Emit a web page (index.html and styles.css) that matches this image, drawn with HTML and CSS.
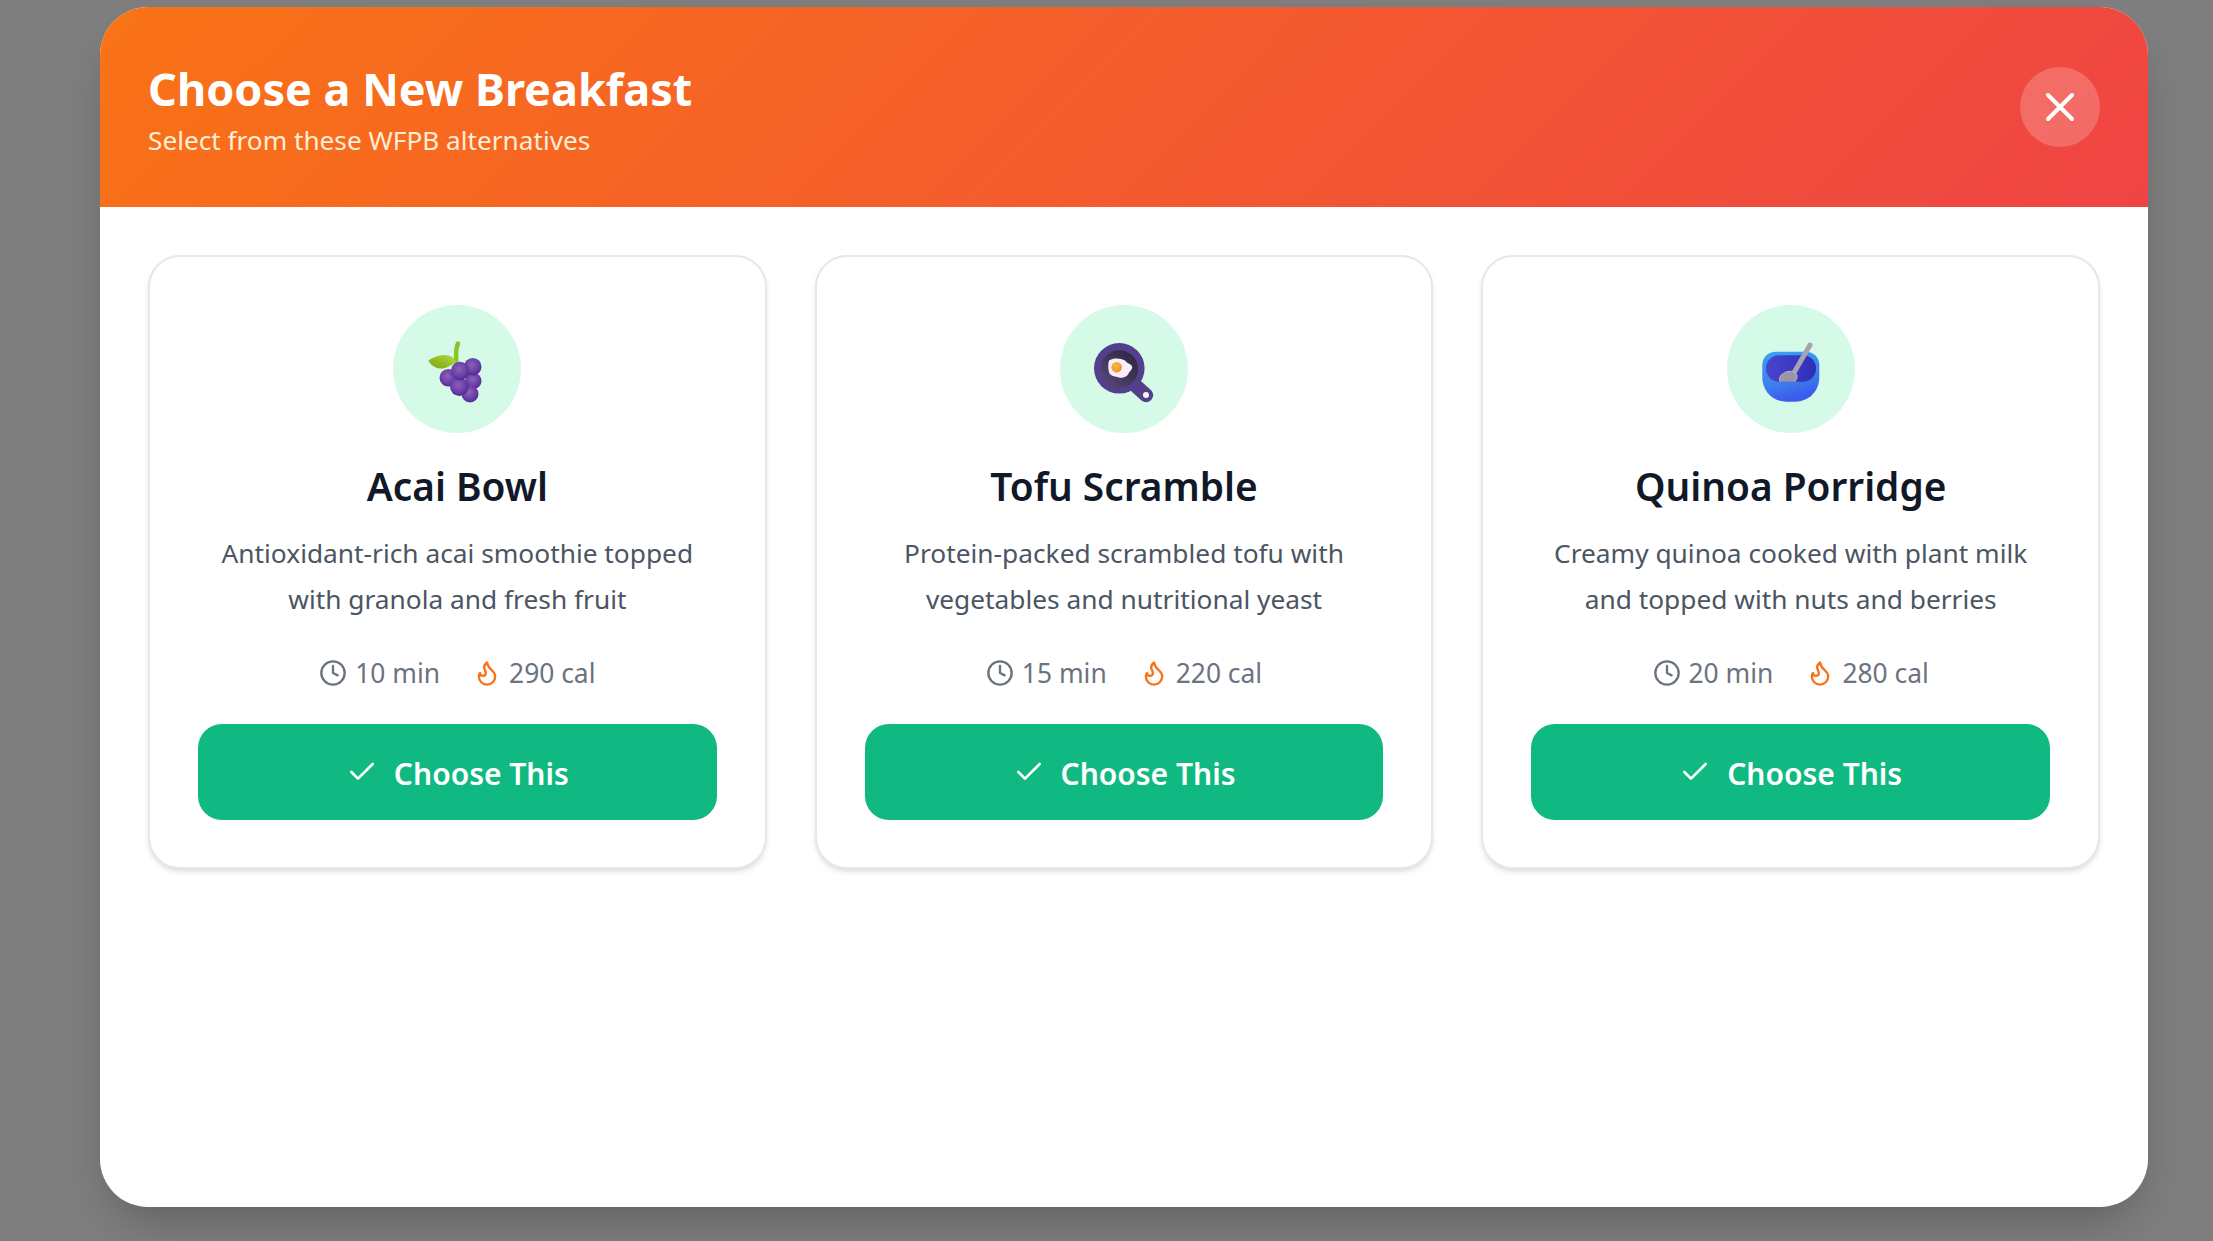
FILE: index.html
```html
<!DOCTYPE html>
<html lang="en">
<head>
<meta charset="utf-8">
<title>Choose a New Breakfast</title>
<link rel="stylesheet" href="styles.css">
</head>
<body>
<div class="overlay">
  <section class="modal">
    <header class="modal-header">
      <div class="heading">
        <h1 class="title">Choose a New Breakfast</h1>
        <p class="subtitle">Select from these WFPB alternatives</p>
      </div>
      <button class="close" aria-label="Close">
        <svg class="close-icon" viewBox="0 0 24 24"><path d="M18 6 6 18M6 6l12 12"/></svg>
      </button>
    </header>
    <div class="cards">
      <article class="card">
        <div class="emoji">
          <svg class="emoji-art" viewBox="0 0 128 128">
            <defs>
              <radialGradient id="berry" cx="0.45" cy="0.4" r="0.62">
                <stop offset="0" stop-color="#8a62b8"/><stop offset="0.65" stop-color="#6a3ea6"/><stop offset="1" stop-color="#4f2590"/>
              </radialGradient>
              <linearGradient id="leaf" x1="0" y1="1" x2="1" y2="0">
                <stop offset="0" stop-color="#7f9f12"/><stop offset="0.6" stop-color="#9cc426"/><stop offset="1" stop-color="#b7d66a"/>
              </linearGradient>
            </defs>
            <path class="stem" d="M65 38.500C62 45 63 52 63.500 59" />
            <path fill="url(#leaf)" d="M35.300 55.700C42 51 54 47 61 53.500L63 57C56 62 51 64 47 63.500C42 63 38 60 35.300 55.700Z"/>
            <circle fill="url(#berry)" cx="55.300" cy="72.700" r="8.800"/>
            <circle fill="url(#berry)" cx="80.300" cy="76" r="8.200"/>
            <circle fill="url(#berry)" cx="79.700" cy="61.700" r="8.800"/>
            <circle fill="url(#berry)" cx="77" cy="89" r="8.500"/>
            <circle fill="url(#berry)" cx="66.300" cy="81.700" r="9.200"/>
            <circle fill="url(#berry)" cx="67" cy="66" r="9.200"/>
          </svg>
        </div>
        <h2 class="card-title">Acai Bowl</h2>
        <p class="desc">Antioxidant-rich acai smoothie topped with granola and fresh fruit</p>
        <div class="meta">
          <span class="meta-item"><svg class="icon clock" viewBox="0 0 24 24"><circle cx="12" cy="12" r="10"/><path d="M12 6v6l4 2"/></svg>10 min</span>
          <span class="meta-item"><svg class="icon flame" viewBox="0 0 24 24"><path d="M8.500 14.500A2.500 2.500 0 0 0 11 12c0-1.380-.5-2-1-3-1.072-2.143-.224-4.054 2-6 .5 2.500 2 4.900 4 6.500 2 1.600 3 3.500 3 5.500a7 7 0 1 1-14 0c0-1.153.433-2.294 1-3a2.500 2.500 0 0 0 2.500 2.500z"/></svg>290 cal</span>
        </div>
        <button class="choose"><svg class="check" viewBox="0 0 24 24"><path d="M20 6 9 17l-5-5"/></svg><span class="choose-label">Choose This</span></button>
      </article>
      <article class="card">
        <div class="emoji">
          <svg class="emoji-art" viewBox="0 0 128 128">
            <defs>
              <linearGradient id="pan" x1="0" y1="1" x2="1" y2="0">
                <stop offset="0" stop-color="#5a4a80"/><stop offset="1" stop-color="#2b2138"/>
              </linearGradient>
              <radialGradient id="yolk" cx="0.4" cy="0.35" r="0.7">
                <stop offset="0" stop-color="#fbb83e"/><stop offset="1" stop-color="#ee9428"/>
              </radialGradient>
            </defs>
            <path class="handle" d="M76.700 81.700 86.200 90.200"/>
            <circle class="hole" cx="86" cy="90" r="3"/>
            <circle fill="#53408a" cx="59.300" cy="63.300" r="25.300"/>
            <circle fill="url(#pan)" cx="59.300" cy="64" r="18.700"/>
            <path fill="#f7eef9" d="M49 55.500C53 52.500 61 53 65 55.500C66 58 71 58.500 72.300 62C72 65 70 66 68.500 68.500C68 71 63 73.500 59 72.500C55 71 50 71.500 49 67C48 63 48 59 49 55.500Z"/>
            <circle fill="url(#yolk)" cx="56.700" cy="62.300" r="5.300"/>
          </svg>
        </div>
        <h2 class="card-title">Tofu Scramble</h2>
        <p class="desc">Protein-packed scrambled tofu with vegetables and nutritional yeast</p>
        <div class="meta">
          <span class="meta-item"><svg class="icon clock" viewBox="0 0 24 24"><circle cx="12" cy="12" r="10"/><path d="M12 6v6l4 2"/></svg>15 min</span>
          <span class="meta-item"><svg class="icon flame" viewBox="0 0 24 24"><path d="M8.500 14.500A2.500 2.500 0 0 0 11 12c0-1.380-.5-2-1-3-1.072-2.143-.224-4.054 2-6 .5 2.500 2 4.900 4 6.500 2 1.600 3 3.500 3 5.500a7 7 0 1 1-14 0c0-1.153.433-2.294 1-3a2.500 2.500 0 0 0 2.500 2.500z"/></svg>220 cal</span>
        </div>
        <button class="choose"><svg class="check" viewBox="0 0 24 24"><path d="M20 6 9 17l-5-5"/></svg><span class="choose-label">Choose This</span></button>
      </article>
      <article class="card">
        <div class="emoji">
          <svg class="emoji-art" viewBox="0 0 128 128">
            <defs>
              <linearGradient id="bowl" x1="0" y1="0" x2="0.3" y2="1">
                <stop offset="0" stop-color="#38a3f0"/><stop offset="0.65" stop-color="#3d80ec"/><stop offset="1" stop-color="#3b5cec"/>
              </linearGradient>
              <linearGradient id="inner" x1="0" y1="0" x2="1" y2="0">
                <stop offset="0" stop-color="#4a45cf"/><stop offset="1" stop-color="#2f2fb4"/>
              </linearGradient>
              <clipPath id="bowl-clip"><path d="M33 30H95V76.700H33Z"/></clipPath>
            </defs>
            <path fill="url(#bowl)" d="M49 46.700H78.500C86.500 46.700 92.300 52.500 92.300 60V72C92.300 86 82 96.700 68 96.700H59.500C45.500 96.700 35.300 86 35.300 72V60C35.300 52.500 41 46.700 49 46.700Z"/>
            <rect fill="url(#inner)" x="39" y="50.300" width="50" height="26.400" rx="13"/>
            <g clip-path="url(#bowl-clip)">
              <path class="spoon" d="M83 40 66.500 68.500"/>
              <ellipse class="spoon-head" cx="61.300" cy="73" rx="9" ry="6.500" transform="rotate(-20 61.300 73)"/>
            </g>
          </svg>
        </div>
        <h2 class="card-title">Quinoa Porridge</h2>
        <p class="desc">Creamy quinoa cooked with plant milk and topped with nuts and berries</p>
        <div class="meta">
          <span class="meta-item"><svg class="icon clock" viewBox="0 0 24 24"><circle cx="12" cy="12" r="10"/><path d="M12 6v6l4 2"/></svg>20 min</span>
          <span class="meta-item"><svg class="icon flame" viewBox="0 0 24 24"><path d="M8.500 14.500A2.500 2.500 0 0 0 11 12c0-1.380-.5-2-1-3-1.072-2.143-.224-4.054 2-6 .5 2.500 2 4.900 4 6.500 2 1.600 3 3.500 3 5.500a7 7 0 1 1-14 0c0-1.153.433-2.294 1-3a2.500 2.500 0 0 0 2.500 2.500z"/></svg>280 cal</span>
        </div>
        <button class="choose"><svg class="check" viewBox="0 0 24 24"><path d="M20 6 9 17l-5-5"/></svg><span class="choose-label">Choose This</span></button>
      </article>
    </div>
  </section>
</div>
</body>
</html>
```
FILE: styles.css
```css
* { box-sizing: border-box; }
html, body { margin: 0; height: 100%; }
body { font-family: "Noto Sans", "Open Sans", sans-serif; background: #fff; overflow: hidden; }
.overlay { height: 100%; background: rgba(0,0,0,.5); padding: 7px 0 0 100px; }
.modal { width: 2048px; height: 1200px; background: #fff; border-radius: 48px; overflow: hidden; box-shadow: 0 25px 50px -12px rgba(0,0,0,.25); }
.modal-header { height: 200px; padding: 0 48px; display: flex; align-items: center; justify-content: space-between; color: #fff; background: linear-gradient(135deg, #f97316, #ef4444); }
.heading { padding-top: 5px; }
.title { margin: 0; font-size: 45px; line-height: 56px; font-weight: 700; }
.subtitle { margin: 5px 0 0; font-size: 26.200px; line-height: 36px; color: #ffedd5; }
.close { width: 80px; height: 80px; border: 0; padding: 0; border-radius: 50%; background: rgba(255,255,255,.2); display: flex; align-items: center; justify-content: center; }
.close-icon { width: 48px; height: 48px; fill: none; stroke: #fff; stroke-width: 2; stroke-linecap: round; stroke-linejoin: round; }
.cards { display: grid; grid-template-columns: repeat(3, 1fr); gap: 48px; padding: 48px; }
.card { border: 2px solid #e5e7eb; border-radius: 32px; padding: 48px 48px 47px; display: flex; flex-direction: column; align-items: center; background: #fff; box-shadow: 0 4px 6px -1px rgba(0,0,0,.1), 0 2px 4px -2px rgba(0,0,0,.1); }
.emoji { width: 128px; height: 128px; border-radius: 50%; background: #d5fae8; }
.emoji-art { display: block; width: 128px; height: 128px; }
.stem { fill: none; stroke: #8cc22a; stroke-width: 4.500; stroke-linecap: round; }
.handle { fill: none; stroke: #53408a; stroke-width: 14; stroke-linecap: round; }
.hole { fill: #f0fbf6; }
.spoon { fill: none; stroke: #a7a1b6; stroke-width: 5; stroke-linecap: round; }
.spoon-head { fill: #9a95a8; stroke: #b5b0c0; stroke-width: 1; }
.card-title { margin: 25px 0 0; font-size: 38.800px; line-height: 56px; font-weight: 600; color: #111827; }
.desc { margin: 17px 0 0; font-size: 26.300px; line-height: 45.500px; color: #4b5563; text-align: center; }
.meta { margin-top: 29px; display: flex; gap: 33px; font-size: 26.400px; line-height: 44px; color: #6b7280; }
.meta-item { display: flex; align-items: center; gap: 8px; }
.icon { width: 28px; height: 28px; fill: none; stroke-width: 2; stroke-linecap: round; stroke-linejoin: round; }
.clock { stroke: #6b7280; }
.flame { stroke: #f97316; }
.choose { margin-top: 29px; width: 100%; height: 96px; border: 0; border-radius: 24px; background: #10b981; color: #fff; font: 600 30px "Noto Sans", "Open Sans", sans-serif; display: flex; align-items: center; justify-content: center; gap: 16px; }
.choose-label { padding-top: 2px; }
.check { width: 32px; height: 32px; fill: none; stroke: #fff; stroke-width: 2; stroke-linecap: round; stroke-linejoin: round; }
```
